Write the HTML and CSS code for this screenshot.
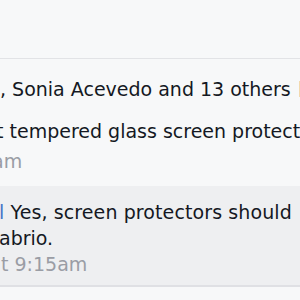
FILE: index.html
```
<!DOCTYPE html>
<html>
<head>
<meta charset="utf-8">
<link rel="stylesheet" href="styles.css">
</head>
<body>
<div class="page">
  <div class="topbar"></div>
  <div class="likes"><span class="line">, Sonia Acevedo and 13 others<span class="badge"></span></span></div>
  <div class="comment">
    <div class="text shift-b">t tempered glass screen protectors?</div>
    <div class="time shift-am">am</div>
  </div>
  <div class="reply">
    <div class="text wide shift-c"><span class="name">l</span> Yes, screen protectors should</div>
    <div class="text shift-d">abrio.</div>
    <div class="time shift-e">t 9:15am</div>
  </div>
  <div class="rest"></div>
</div>
</body>
</html>
```
FILE: styles.css
```
html, body {
  margin: 0;
  padding: 0;
  width: 300px;
  height: 300px;
  overflow: hidden;
  background: #f7f8f9;
}
.page {
  width: 300px;
  height: 300px;
  overflow: hidden;
  font-family: "DejaVu Sans", Verdana, sans-serif;
  font-size: 19px;
  line-height: 26px;
  color: #141823;
  white-space: nowrap;
}
.topbar {
  height: 58px;
  border-bottom: 1px solid #e2e3e6;
}
.likes {
  padding-top: 17px;
}
.badge {
  display: inline-block;
  width: 12px;
  height: 16px;
  margin-left: 8px;
  background: #f3d9ae;
  vertical-align: -1px;
}
.comment {
  padding: 16px 0 12px;
}
.time {
  color: #9a9da5;
}
.comment .time {
  margin-top: 4px;
}
.reply {
  background: #eeeff1;
  border-bottom: 2px solid #dfe0e4;
  padding: 13px 0 8px;
}
.wide {
  letter-spacing: 0.1px;
}
.name {
  color: #4576c8;
}
.shift-b { margin-left: -4px; }
.shift-am { margin-left: -8px; }
.shift-c { margin-left: -1px; }
.shift-d { margin-left: -1px; }
.shift-e { margin-left: 1px; }
.rest {
  height: 20px;
}
```
